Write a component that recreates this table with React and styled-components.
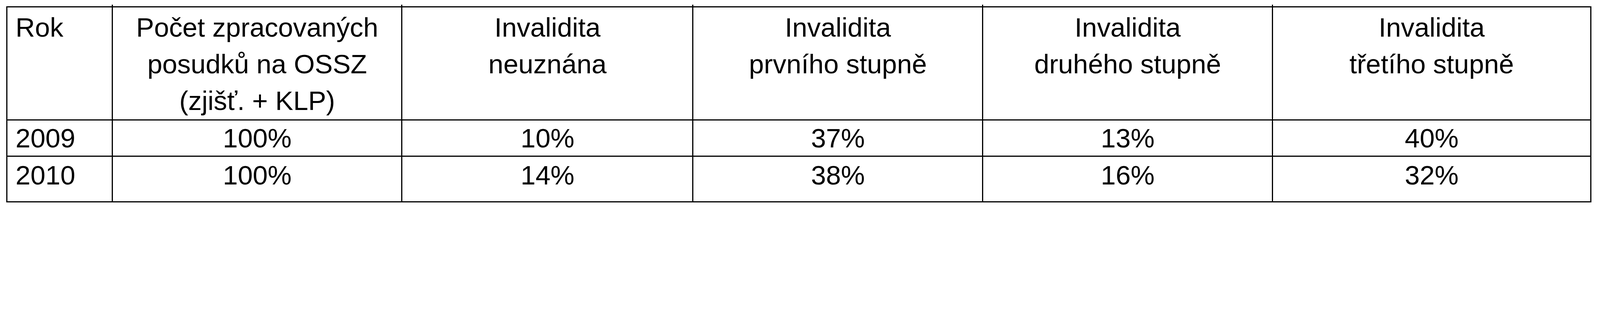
import React from "react";
import styled, { createGlobalStyle } from "styled-components";

/* The layout is drawn for a 6129px-wide page; every length is expressed in
   viewport units so that the table keeps its proportions on any width. */
const v = (px) => `${((px / 6129) * 100).toFixed(5)}vw`;

const GlobalStyle = createGlobalStyle`
  html, body {
    margin: 0;
    padding: 0;
    background: #ffffff;
  }
  body {
    font-family: "Liberation Sans", Arial, sans-serif;
    color: #000000;
  }
`;

const Page = styled.div`
  padding: ${v(24)} 0 0 ${v(24)};
`;

const Table = styled.table`
  border-collapse: collapse;
  table-layout: fixed;
  width: ${v(6067)};
  border: ${v(5)} solid #000;
  font-family: "Liberation Sans", Arial, sans-serif;
  font-size: ${v(103)};
  color: #000;
`;

const Col = styled.col`
  width: ${(p) => v(p.$w)};
`;

const HeadCell = styled.th`
  position: relative;
  font-weight: normal;
  vertical-align: top;
  text-align: ${(p) => (p.$left ? "left" : "center")};
  line-height: ${v(140.5)};
  padding: ${v(8)} ${v(30)} 0 ${v(31)};
  height: ${v(421)};
  border: ${v(4.5)} solid #000;
  border-top-width: ${v(5)};

  ${(p) =>
    p.$tick &&
    `
    &::before {
      content: "";
      position: absolute;
      left: ${v(-4.5)};
      top: ${v(-10)};
      width: ${v(4.5)};
      height: ${v(6)};
      background: #000;
    }
  `}
`;

const Cell = styled.td`
  vertical-align: top;
  text-align: ${(p) => (p.$left ? "left" : "center")};
  line-height: ${v(120)};
  padding: ${(p) => (p.$last ? v(13) : v(9))} ${v(30)} 0 ${v(31)};
  height: ${(p) => (p.$last ? v(158) : v(125))};
  border: ${v(4.5)} solid #000;
`;

const widths = [404, 1109, 1115, 1110, 1110, 1219];

const headers = [
  ["Rok"],
  ["Počet zpracovaných", "posudků na OSSZ", "(zjišť. + KLP)"],
  ["Invalidita", "neuznána"],
  ["Invalidita", "prvního stupně"],
  ["Invalidita", "druhého stupně"],
  ["Invalidita", "třetího stupně"],
];

const rows = [
  ["2009", "100%", "10%", "37%", "13%", "40%"],
  ["2010", "100%", "14%", "38%", "16%", "32%"],
];

export default function App() {
  return (
    <>
      <GlobalStyle />
      <Page>
        <Table>
          <colgroup>
            {widths.map((w, i) => (
              <Col key={i} $w={w} />
            ))}
          </colgroup>
          <thead>
            <tr>
              {headers.map((lines, i) => (
                <HeadCell key={i} $left={i === 0} $tick={i > 0}>
                  {lines.map((l, j) => (
                    <React.Fragment key={j}>
                      {j > 0 && <br />}
                      {l}
                    </React.Fragment>
                  ))}
                </HeadCell>
              ))}
            </tr>
          </thead>
          <tbody>
            {rows.map((r, ri) => (
              <tr key={ri}>
                {r.map((val, ci) => (
                  <Cell key={ci} $left={ci === 0} $last={ri === rows.length - 1}>
                    {val}
                  </Cell>
                ))}
              </tr>
            ))}
          </tbody>
        </Table>
      </Page>
    </>
  );
}
